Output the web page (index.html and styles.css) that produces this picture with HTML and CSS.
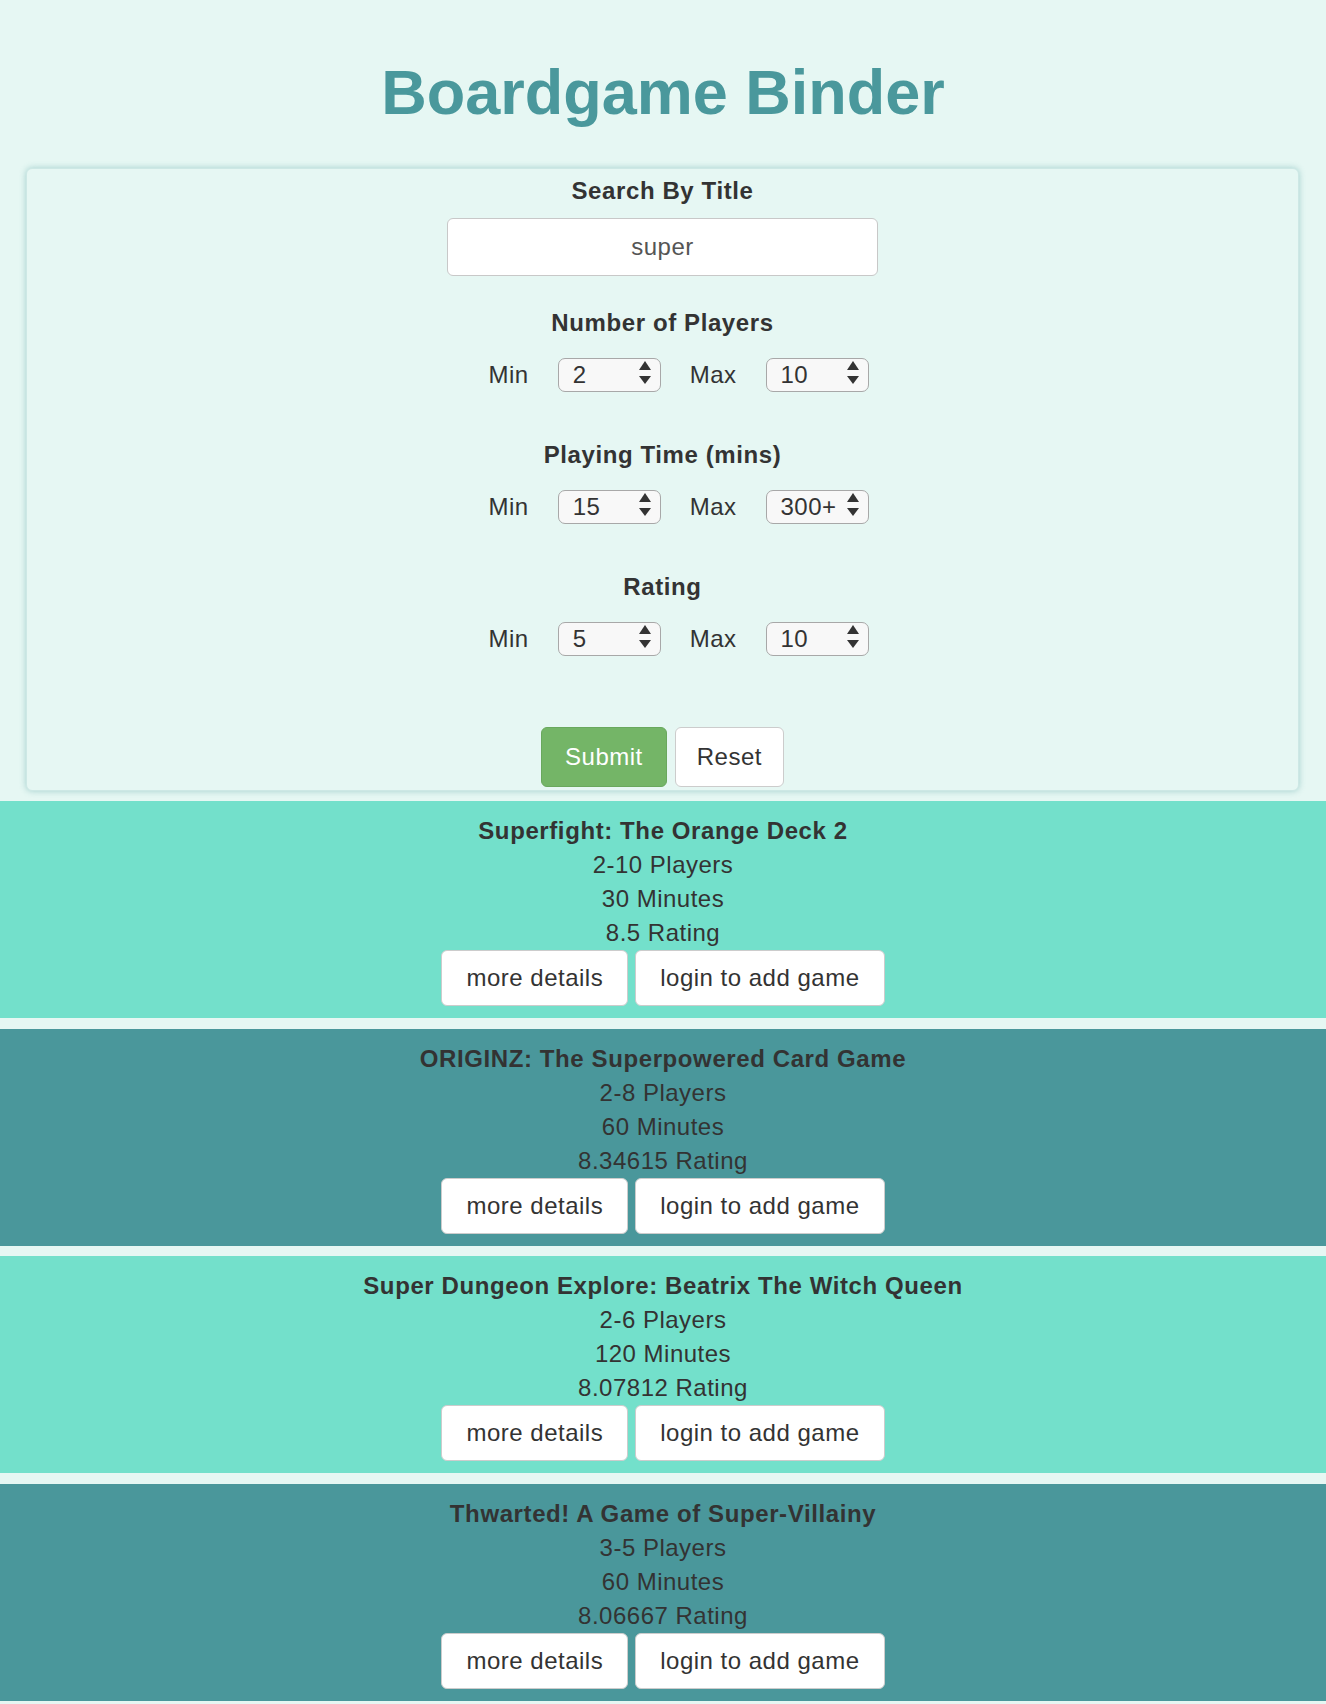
FILE: index.html
```html
<!DOCTYPE html>
<html lang="en">
<head>
<meta charset="utf-8">
<title>Boardgame Binder</title>
<link rel="stylesheet" href="styles.css">
</head>
<body>
<h1 class="page-title">Boardgame Binder</h1>

<form class="search-panel">
  <div class="field-label">Search By Title</div>
  <input class="search-input" type="text" value="super">

  <div class="field-label group-gap-small">Number of Players</div>
  <div class="range-row">
    <span class="range-label">Min</span>
    <span class="select-wrap">
      <select class="range-select"><option>2</option></select>
      <svg class="select-arrows" width="12" height="24" viewBox="0 0 12 24"><polygon points="6,0 12,9 0,9"/><polygon points="0,15 12,15 6,23"/></svg>
    </span>
    <span class="range-label">Max</span>
    <span class="select-wrap">
      <select class="range-select"><option>10</option></select>
      <svg class="select-arrows" width="12" height="24" viewBox="0 0 12 24"><polygon points="6,0 12,9 0,9"/><polygon points="0,15 12,15 6,23"/></svg>
    </span>
  </div>

  <div class="field-label group-gap">Playing Time (mins)</div>
  <div class="range-row">
    <span class="range-label">Min</span>
    <span class="select-wrap">
      <select class="range-select"><option>15</option></select>
      <svg class="select-arrows" width="12" height="24" viewBox="0 0 12 24"><polygon points="6,0 12,9 0,9"/><polygon points="0,15 12,15 6,23"/></svg>
    </span>
    <span class="range-label">Max</span>
    <span class="select-wrap">
      <select class="range-select"><option>300+</option></select>
      <svg class="select-arrows" width="12" height="24" viewBox="0 0 12 24"><polygon points="6,0 12,9 0,9"/><polygon points="0,15 12,15 6,23"/></svg>
    </span>
  </div>

  <div class="field-label group-gap">Rating</div>
  <div class="range-row">
    <span class="range-label">Min</span>
    <span class="select-wrap">
      <select class="range-select"><option>5</option></select>
      <svg class="select-arrows" width="12" height="24" viewBox="0 0 12 24"><polygon points="6,0 12,9 0,9"/><polygon points="0,15 12,15 6,23"/></svg>
    </span>
    <span class="range-label">Max</span>
    <span class="select-wrap">
      <select class="range-select"><option>10</option></select>
      <svg class="select-arrows" width="12" height="24" viewBox="0 0 12 24"><polygon points="6,0 12,9 0,9"/><polygon points="0,15 12,15 6,23"/></svg>
    </span>
  </div>

  <div class="form-actions">
    <button type="button" class="btn btn-submit">Submit</button>
    <button type="button" class="btn btn-reset">Reset</button>
  </div>
</form>

<div class="results">
  <div class="game-card card-light">
    <div class="game-title">Superfight: The Orange Deck 2</div>
    <div class="game-line">2-10 Players</div>
    <div class="game-line">30 Minutes</div>
    <div class="game-line">8.5 Rating</div>
    <div class="card-actions">
      <button type="button" class="card-btn">more details</button>
      <button type="button" class="card-btn">login to add game</button>
    </div>
  </div>
  <div class="game-card card-dark">
    <div class="game-title">ORIGINZ: The Superpowered Card Game</div>
    <div class="game-line">2-8 Players</div>
    <div class="game-line">60 Minutes</div>
    <div class="game-line">8.34615 Rating</div>
    <div class="card-actions">
      <button type="button" class="card-btn">more details</button>
      <button type="button" class="card-btn">login to add game</button>
    </div>
  </div>
  <div class="game-card card-light">
    <div class="game-title">Super Dungeon Explore: Beatrix The Witch Queen</div>
    <div class="game-line">2-6 Players</div>
    <div class="game-line">120 Minutes</div>
    <div class="game-line">8.07812 Rating</div>
    <div class="card-actions">
      <button type="button" class="card-btn">more details</button>
      <button type="button" class="card-btn">login to add game</button>
    </div>
  </div>
  <div class="game-card card-dark">
    <div class="game-title">Thwarted! A Game of Super-Villainy</div>
    <div class="game-line">3-5 Players</div>
    <div class="game-line">60 Minutes</div>
    <div class="game-line">8.06667 Rating</div>
    <div class="card-actions">
      <button type="button" class="card-btn">more details</button>
      <button type="button" class="card-btn">login to add game</button>
    </div>
  </div>
</div>
</body>
</html>
```

FILE: styles.css
```css
* {
  box-sizing: border-box;
}

body {
  margin: 0;
  background: #e6f7f3;
  font-family: "Liberation Sans", Arial, Helvetica, sans-serif;
  font-size: 24px;
  color: #333;
  letter-spacing: 0.5px;
}

.page-title {
  margin: 58px 0 41px;
  text-align: center;
  font-size: 63px;
  line-height: 1.1;
  font-weight: bold;
  color: #4a989c;
  letter-spacing: 0;
}

.search-panel {
  display: block;
  margin: 0 27px 10px 26px;
  padding: 5px 0 3px;
  border: 1px solid #cde8e5;
  border-radius: 6px;
  background: #e6f7f3;
  box-shadow: 0 0 6px rgba(80, 160, 160, 0.45);
  text-align: center;
}

.field-label {
  font-weight: bold;
  line-height: 34px;
  letter-spacing: 0.6px;
}

.group-gap-small {
  margin-top: 30px;
}

.group-gap {
  margin-top: 46px;
}

.search-input {
  display: block;
  width: 431px;
  height: 58px;
  margin: 10px auto 0;
  padding: 0 12px;
  border: 1px solid #c8c8c8;
  border-radius: 6px;
  background: #fff;
  font-family: inherit;
  font-size: 24px;
  letter-spacing: 0.5px;
  color: #555;
  text-align: center;
}

.range-row {
  display: flex;
  justify-content: center;
  align-items: center;
  gap: 29px;
  margin-top: 18px;
  padding-left: 32px;
  height: 34px;
}

.range-label {
  line-height: 34px;
}

.select-wrap {
  position: relative;
  display: block;
  width: 103px;
  height: 34px;
}

.range-select {
  -webkit-appearance: none;
  appearance: none;
  display: block;
  width: 103px;
  height: 34px;
  margin: 0;
  padding: 0 0 0 14px;
  border: 1px solid #a8a8a8;
  border-radius: 7px;
  background: #f8f8f8;
  font-family: inherit;
  font-size: 24px;
  letter-spacing: 0.5px;
  line-height: 32px;
  color: #333;
}

.select-arrows {
  position: absolute;
  top: 3px;
  right: 10px;
  fill: #333;
  pointer-events: none;
}

.form-actions {
  display: flex;
  justify-content: center;
  gap: 8px;
  margin-top: 71px;
}

.btn {
  margin: 0;
  padding: 12px 22px;
  border: 1px solid #ccc;
  border-radius: 6px;
  font-family: inherit;
  font-size: 24px;
  line-height: 34px;
  letter-spacing: 0.5px;
}

.btn-submit {
  padding: 12px 23px;
  background: #74b567;
  border-color: #69a85d;
  color: #fff;
}

.btn-reset {
  padding: 12px 21px;
  background: #fff;
  color: #333;
}

.game-card {
  padding: 13px 0 12px;
  margin-bottom: 10.5px;
  text-align: center;
}

.card-light {
  background: #73e0cb;
}

.card-dark {
  background: #4a979b;
}

.game-title {
  font-weight: bold;
  line-height: 34px;
  letter-spacing: 0.6px;
}

.game-line {
  line-height: 34px;
}

.card-actions {
  display: flex;
  justify-content: center;
  gap: 7px;
}

.card-btn {
  margin: 0;
  padding: 10px 24px;
  border: 1px solid #ccc;
  border-radius: 6px;
  background: #fff;
  font-family: inherit;
  font-size: 24px;
  line-height: 34px;
  letter-spacing: 0.5px;
  color: #333;
}
```
